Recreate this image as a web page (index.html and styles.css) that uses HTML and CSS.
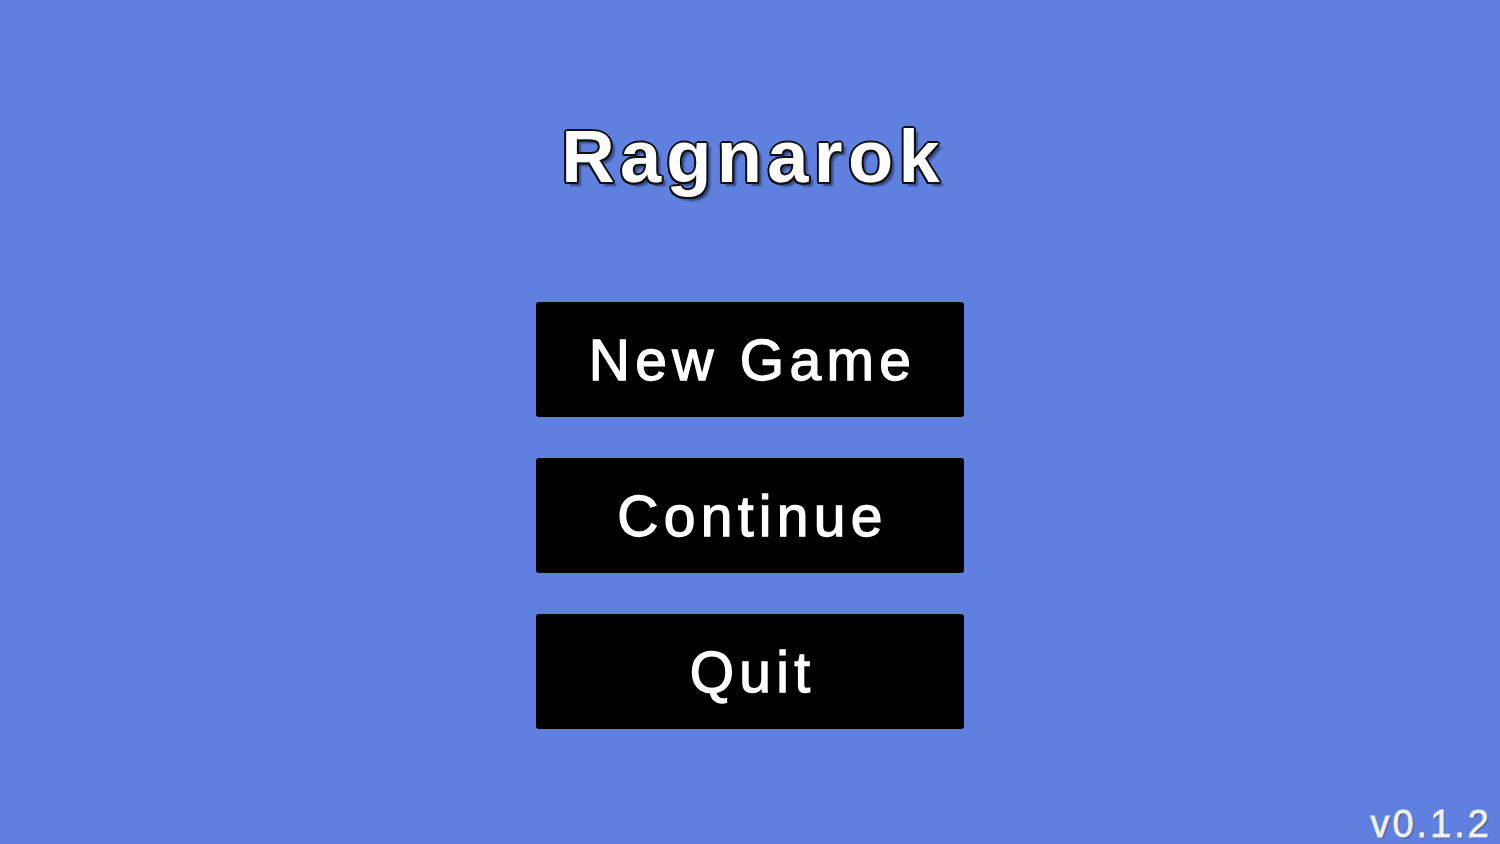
FILE: index.html
```html
<!DOCTYPE html>
<html>
<head>
<meta charset="utf-8">
<link rel="stylesheet" href="styles.css">
</head>
<body>
<main class="screen">
  <h1 class="title">Ragnarok</h1>
  <nav class="menu">
    <button class="btn">New Game</button>
    <button class="btn">Continue</button>
    <button class="btn">Quit</button>
  </nav>
  <div class="version">v0.1.2</div>
</main>
</body>
</html>
```
FILE: styles.css
```css
html, body {
  margin: 0;
  padding: 0;
  width: 100%;
  height: 100%;
  overflow: hidden;
}
body {
  background: #5f80de;
  font-family: "Liberation Sans", Arial, sans-serif;
}
.screen {
  position: relative;
  height: 844px;
  display: flex;
  flex-direction: column;
  align-items: center;
}
.title {
  margin: 112px 0 0 0;
  padding-left: 6px;
  font-size: 74px;
  line-height: 90px;
  font-weight: 700;
  letter-spacing: 5.3px;
  color: #fff;
  text-shadow:
    -1.5px -1.5px 0 #111, 1.5px -1.5px 0 #111, -1.5px 1.5px 0 #111, 1.5px 1.5px 0 #111,
    0 -2px 0 #111, 0 2px 0 #111, -2px 0 0 #111, 2px 0 0 #111,
    4px 4px 2px rgba(20, 30, 60, 0.55);
}
.menu {
  margin-top: 100px;
  display: flex;
  flex-direction: column;
  gap: 41px;
}
.btn {
  width: 428px;
  height: 115px;
  background: #000;
  border: none;
  border-radius: 3px;
  color: #fff;
  font-family: "Liberation Sans", Arial, sans-serif;
  font-size: 57px;
  font-weight: 400;
  letter-spacing: 5.3px;
  -webkit-text-stroke: 1.3px #fff;
  padding: 0 0 0 5px;
}
.version {
  position: absolute;
  right: 8px;
  bottom: -2px;
  font-size: 38px;
  letter-spacing: 3px;
  color: #f0f0f0;
  -webkit-text-stroke: 0.8px #f0f0f0;
  text-shadow: 1px 1px 1px rgba(0,0,0,0.55);
}
```
